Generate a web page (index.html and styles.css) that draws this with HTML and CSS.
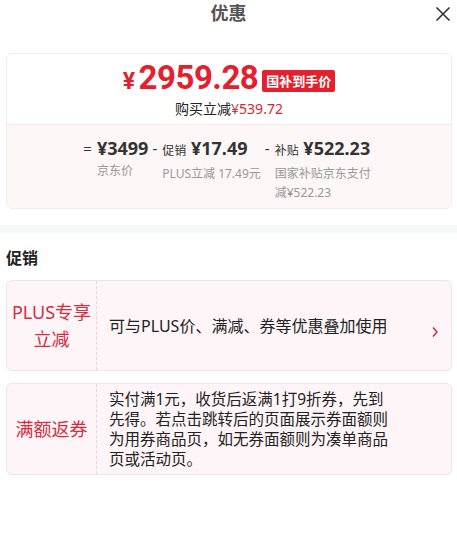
FILE: index.html
```html
<!DOCTYPE html>
<html lang="zh-CN">
<head>
  <meta charset="UTF-8">
  <meta name="viewport" content="width=device-width, initial-scale=1.0">
  <title>优惠</title>
  <link rel="stylesheet" href="styles.css">
</head>
<body>
  <header class="top">
    <h1>优惠</h1>
    <span class="close">
      <svg width="16" height="16" viewBox="0 0 16 16"><path d="M1.5 1.5 L14.5 14.5 M14.5 1.5 L1.5 14.5" stroke="#333" stroke-width="1.6" fill="none"/></svg>
    </span>
  </header>

  <div class="price-card">
    <div class="price-main">
      <div class="final">
        <span class="final-price"><span class="yen">¥</span>2959.28</span>
        <span class="tag">国补到手价</span>
      </div>
      <div class="save">购买立减<span class="red">¥539.72</span></div>
    </div>
    <div class="price-calc">
      <div class="calc-item">
        <span class="op">=</span>
        <div>
          <div class="val">¥3499</div>
          <div class="desc">京东价</div>
        </div>
      </div>
      <div class="calc-item">
        <span class="op">-</span>
        <div>
          <div class="val"><small>促销</small> ¥17.49</div>
          <div class="desc">PLUS立减 17.49元</div>
        </div>
      </div>
      <div class="calc-item">
        <span class="op">-</span>
        <div>
          <div class="val"><small>补贴</small> ¥522.23</div>
          <div class="desc wrap">国家补贴京东支付减¥522.23</div>
        </div>
      </div>
    </div>
  </div>

  <div class="band"></div>

  <div class="section">
    <h2>促销</h2>
    <div class="promo">
      <div class="promo-name">PLUS专享<br>立减</div>
      <div class="promo-text">可与PLUS价、满减、券等优惠叠加使用</div>
      <span class="arrow">
        <svg width="8" height="12" viewBox="0 0 8 12"><path d="M2 1.5 L6 6 L2 10.5" stroke="#c8243c" stroke-width="1.4" fill="none"/></svg>
      </span>
    </div>
    <div class="promo">
      <div class="promo-name">满额返券</div>
      <div class="promo-text long">实付满1元，收货后返满1打9折券，先到先得。若点击跳转后的页面展示券面额则为用券商品页，如无券面额则为凑单商品页或活动页。</div>
    </div>
  </div>
</body>
</html>
```

FILE: styles.css
```css
body {
  font-family: "Noto Sans", "Noto Sans CJK SC", sans-serif;
  background: #fff;
  color: #333;
  margin: 0;
  padding: 0;
}

.top {
  position: relative;
  height: 26px;
  text-align: center;
}

.top h1 {
  margin: 0;
  font-size: 18px;
  line-height: 26px;
  color: #555;
  font-weight: bold;
}

.close {
  position: absolute;
  right: 6px;
  top: 5px;
}

.price-card {
  margin: 27px 5px 0 6px;
  border: 1px solid #eee;
  border-radius: 6px;
  overflow: hidden;
}

.price-main {
  padding: 10px 0 5px;
  text-align: center;
  border-bottom: 1px solid #f8e8ea;
}

.final {
  display: flex;
  justify-content: center;
  align-items: center;
  gap: 4px;
  height: 32px;
}

.final-price {
  font-family: Roboto, sans-serif;
  font-size: 33px;
  font-weight: bold;
  color: #e4202e;
  line-height: 32px;
  letter-spacing: -0.5px;
}

.yen {
  font-size: 23px;
  margin-right: 4px;
}

.tag {
  background: #e4202e;
  color: #fff;
  font-size: 13px;
  font-weight: bold;
  line-height: 22px;
  padding: 0 4px;
  border-radius: 2px;
  margin-top: 2px;
}

.save {
  font-size: 14px;
  line-height: 20px;
  margin-top: 3px;
  color: #222;
}

.red {
  color: #e4202e;
}

.price-calc {
  background: #fdf7f7;
  display: flex;
  justify-content: center;
  gap: 4px;
  padding: 11px 0 6px;
}

.calc-item {
  display: flex;
  gap: 5px;
}

.op {
  font-size: 15px;
  line-height: 24px;
  color: #333;
}

.val {
  font-size: 18px;
  font-weight: bold;
  color: #333;
  line-height: 24px;
  white-space: nowrap;
}

.val small {
  font-size: 12px;
  font-weight: normal;
}

.desc {
  font-size: 12px;
  color: #999;
  line-height: 19px;
  margin-top: 1px;
  white-space: nowrap;
}

.desc.wrap {
  white-space: normal;
  width: 100px;
}

.band {
  height: 8px;
  background: #f5f7fb;
  margin-top: 16px;
}

.section {
  padding: 0 5px 0 6px;
}

.section h2 {
  margin: 14px 0 11px;
  font-size: 16px;
  line-height: 22px;
  color: #222;
}

.promo {
  display: flex;
  align-items: center;
  position: relative;
  background: #fdf5f7;
  border: 1px solid #f3e3e6;
  border-radius: 6px;
  min-height: 89px;
  margin-bottom: 12px;
}

.promo-name {
  width: 89px;
  align-self: stretch;
  display: flex;
  align-items: center;
  justify-content: center;
  text-align: center;
  border-right: 1px dashed #f0cfd6;
  color: #d92b3f;
  font-size: 18px;
  line-height: 27px;
}

.promo-text {
  flex: 1;
  padding: 5px 12px;
  font-size: 16px;
  line-height: 20px;
  color: #222;
}

.promo-text.long {
  flex: none;
  width: 284px;
  font-size: 15.5px;
  line-height: 20px;
}

.arrow {
  position: absolute;
  right: 12px;
  top: 40px;
}
```
